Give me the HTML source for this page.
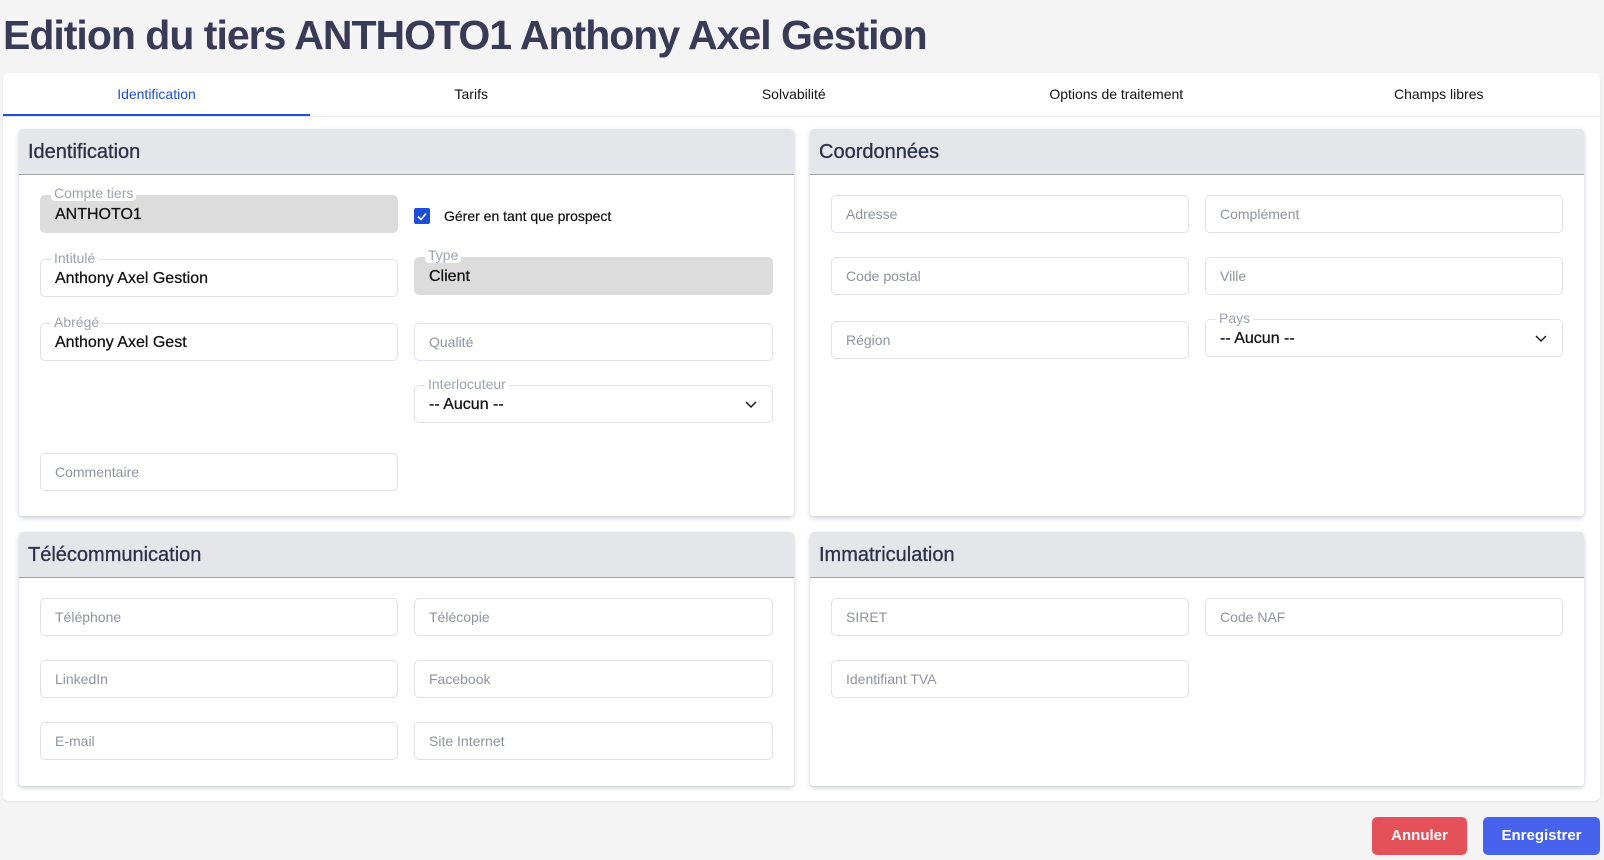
<!DOCTYPE html>
<html><head><meta charset="utf-8"><style>
*{box-sizing:border-box;margin:0;padding:0}
body{width:1604px;height:860px;background:#f4f4f5;font-family:"Liberation Sans",sans-serif;position:relative;overflow:hidden;color:#111}
.abs{position:absolute}
h1{position:absolute;left:3px;top:12px;font-size:41px;font-weight:bold;color:#383a56;letter-spacing:-1px;white-space:nowrap}
.card{left:3px;top:73px;width:1597px;height:728px;background:#fff;border-radius:6px;box-shadow:0 1px 2px rgba(0,0,0,.08)}
.tabs{left:3px;top:73px;width:1597px;height:44px;border-bottom:1px solid #e5e7eb;display:flex}
.tab{flex:1;text-align:center;font-size:14px;line-height:42px;color:#111}
.tab.a{color:#1d4ed8;border-bottom:2px solid #1d4ed8;flex:0 0 307px;padding-left:0}
.panel{background:#fff;border-radius:4px;box-shadow:0 2px 5px rgba(100,116,139,.35)}
.ph{height:46px;background:#e5e6ea;border-bottom:1px solid #9ca3af;font-size:20px;color:#2d3148;padding:12px 9px;border-radius:4px 4px 0 0;-webkit-text-stroke:.3px #2d3148}
.f{position:absolute;height:38px;border:1px solid #dfe2e8;border-radius:5px;background:#fff;font-size:14px;color:#8e939c;padding:10px 14px;white-space:nowrap}
.f.g{background:#dcdcdc;border-color:#dcdcdc}
.f.v{font-size:16px;color:#111;padding:10px 14px;-webkit-text-stroke:.25px #111}
.f .l{position:absolute;left:10px;top:-9px;font-size:14px;color:#9ca3af;background:#fff;padding:0 3px;line-height:14px;-webkit-text-stroke:0}
.f.g .l{top:-11px;border-radius:4px;padding:1px 3px}
.chev{position:absolute;right:14px;top:11px}
.btn{position:absolute;top:817px;height:38px;border-radius:5px;color:#fff;font-weight:bold;font-size:15px;text-align:center;line-height:38px}
</style></head><body>
<h1>Edition du tiers ANTHOTO1 Anthony Axel Gestion</h1>
<div class="abs card"></div>
<div class="abs tabs"><div class="tab a">Identification</div><div class="tab">Tarifs</div><div class="tab">Solvabilité</div><div class="tab">Options de traitement</div><div class="tab">Champs libres</div></div>

<div class="abs panel" style="left:19px;top:129px;width:775px;height:387px"><div class="ph">Identification</div></div>
<div class="abs panel" style="left:810px;top:129px;width:774px;height:387px"><div class="ph">Coordonnées</div></div>
<div class="abs panel" style="left:19px;top:532px;width:775px;height:254px"><div class="ph">Télécommunication</div></div>
<div class="abs panel" style="left:810px;top:532px;width:774px;height:254px"><div class="ph">Immatriculation</div></div>

<div class="f v g" style="left:40px;top:195px;width:358px"><span class="l">Compte tiers</span>ANTHOTO1</div>
<div class="abs" style="left:414px;top:208px;width:16px;height:16px;background:#1d4ed8;border-radius:2px"><svg width="16" height="16"><path d="M4 8.5l3 3 5-6" stroke="#fff" stroke-width="1.6" fill="none"/></svg></div>
<div class="abs" style="left:444px;top:208px;font-size:14px;color:#111;-webkit-text-stroke:.2px #111">Gérer en tant que prospect</div>
<div class="f v" style="left:40px;top:259px;width:358px"><span class="l">Intitulé</span>Anthony Axel Gestion</div>
<div class="f v g" style="left:414px;top:257px;width:359px"><span class="l">Type</span>Client</div>
<div class="f v" style="left:40px;top:323px;width:358px"><span class="l">Abrégé</span>Anthony Axel Gest</div>
<div class="f" style="left:414px;top:323px;width:359px">Qualité</div>
<div class="f v" style="left:414px;top:385px;width:359px"><span class="l">Interlocuteur</span>-- Aucun --<svg class="chev" width="14" height="14"><path d="M2 5l5 5 5-5" stroke="#111" stroke-width="1.4" fill="none"/></svg></div>
<div class="f" style="left:40px;top:453px;width:358px">Commentaire</div>

<div class="f" style="left:831px;top:195px;width:358px">Adresse</div>
<div class="f" style="left:1205px;top:195px;width:358px">Complément</div>
<div class="f" style="left:831px;top:257px;width:358px">Code postal</div>
<div class="f" style="left:1205px;top:257px;width:358px">Ville</div>
<div class="f" style="left:831px;top:321px;width:358px">Région</div>
<div class="f v" style="left:1205px;top:319px;width:358px"><span class="l">Pays</span>-- Aucun --<svg class="chev" width="14" height="14"><path d="M2 5l5 5 5-5" stroke="#111" stroke-width="1.4" fill="none"/></svg></div>

<div class="f" style="left:40px;top:598px;width:358px">Téléphone</div>
<div class="f" style="left:414px;top:598px;width:359px">Télécopie</div>
<div class="f" style="left:40px;top:660px;width:358px">LinkedIn</div>
<div class="f" style="left:414px;top:660px;width:359px">Facebook</div>
<div class="f" style="left:40px;top:722px;width:358px">E-mail</div>
<div class="f" style="left:414px;top:722px;width:359px">Site Internet</div>

<div class="f" style="left:831px;top:598px;width:358px">SIRET</div>
<div class="f" style="left:1205px;top:598px;width:358px">Code NAF</div>
<div class="f" style="left:831px;top:660px;width:358px">Identifiant TVA</div>

<div class="btn" style="left:1372px;width:95px;background:#e5515b">Annuler</div>
<div class="btn" style="left:1483px;width:117px;background:#4763ee">Enregistrer</div>
</body></html>
